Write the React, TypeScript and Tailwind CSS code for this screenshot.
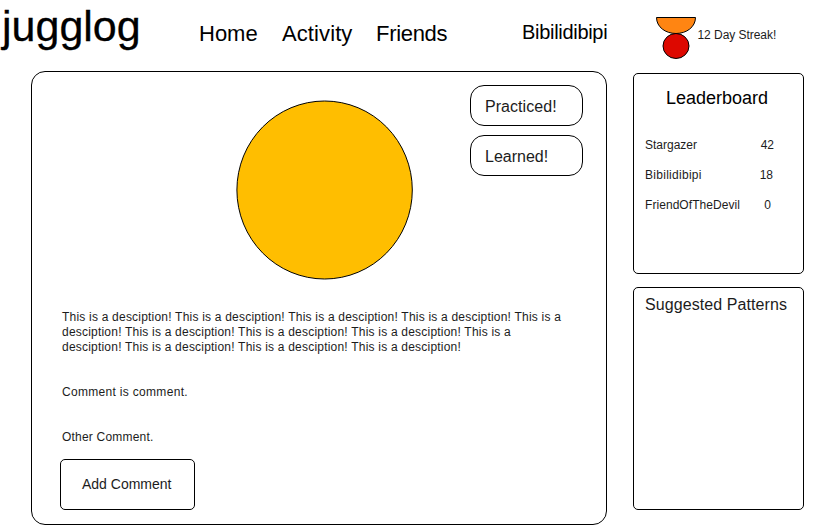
import React from "react";

const leaders = [
  { name: "Stargazer", score: "42", pad: "pr-[29px]", track: "" },
  { name: "Bibilidibipi", score: "18", pad: "pr-[30px]", track: "tracking-[0.28px]" },
  { name: "FriendOfTheDevil", score: "0", pad: "pr-8", track: "tracking-[0.06px]" },
];

function Header() {
  return (
    <header className="flex h-[71px] items-start whitespace-nowrap">
      <h1 className="w-[199px] pl-[2px] text-[43px] leading-[52px] [-webkit-text-stroke:0.3px_black]">jugglog</h1>
      <nav className="flex w-[323px] pt-[18px] text-[22px] leading-8">
        <a className="w-[83px]">Home</a>
        <a className="w-[94px] tracking-[0.1px]">Activity</a>
        <a className="tracking-[-0.3px]">Friends</a>
      </nav>
      <div className="w-[134px] pt-5 text-[20px] leading-6 tracking-[-0.3px]">Bibilidibipi</div>
      <svg className="mt-4 h-11 w-10" viewBox="656 16 40 44" fill="none" stroke="#000">
        <path d="M656.5 17.5H695.5C695.5 27 686.5 33.5 676 33.5S656.5 27 656.5 17.5Z" fill="#ff8512" />
        <ellipse cx="676" cy="46" rx="13" ry="12.5" fill="#dd0800" />
      </svg>
      <div className="pl-[1.5px] pt-7 text-[12px] leading-[14px] tracking-[-0.05px] text-[#1c1c1c]">12 Day Streak!</div>
    </header>
  );
}

function Post() {
  return (
    <main className="flex h-[454px] w-[576px] flex-col rounded-[14px] border border-black">
      <div className="flex h-[238px] justify-between pl-[204px] pr-[23px]">
        <svg className="mt-7 h-[180px] w-[178px]" viewBox="236 100 178 180">
          <ellipse cx="324.6" cy="190" rx="87.7" ry="89" fill="#ffbe00" stroke="#000" />
        </svg>
        <div className="flex w-[113px] flex-col gap-[9px] pt-[13px] text-[16px] text-[#1c1c1c]">
          <button className="h-[41px] rounded-[14px] border border-black pl-[14px] pt-[2px] text-left tracking-[0.05px]">
            Practiced!
          </button>
          <button className="h-[41px] rounded-[14px] border border-black pl-[14px] pt-[2px] text-left">
            Learned!
          </button>
        </div>
      </div>
      <div className="flex h-[149px] flex-col pl-[30px] text-[12px] leading-[15px] text-[#1c1c1c]">
        <p className="h-[75px] w-[510px] tracking-[0.21px]">
          This is a desciption! This is a desciption! This is a desciption! This is a desciption! This is a
          <br />
          desciption! This is a desciption! This is a desciption! This is a desciption! This is a
          <br />
          desciption! This is a desciption! This is a desciption! This is a desciption!
        </p>
        <p className="h-[45px] tracking-[0.31px]">Comment is comment.</p>
        <p className="tracking-[0.2px]">Other Comment.</p>
      </div>
      <button className="ml-7 h-[51px] w-[135px] rounded-[5px] border border-black pl-[21px] text-left text-[14px] text-[#1c1c1c]">
        Add Comment
      </button>
    </main>
  );
}

function Sidebar() {
  return (
    <aside className="flex w-[171px] flex-col gap-[13px] pt-[2px]">
      <section className="h-[201px] rounded-[5px] border border-black pt-[14px]">
        <h2 className="pl-8 text-[18px] leading-5">Leaderboard</h2>
        <ul className="pt-[22px] text-[12px] leading-[30px] text-[#1c1c1c]">
          {leaders.map((l) => (
            <li key={l.name} className={`flex justify-between pl-[11px] ${l.pad}`}>
              <span className={l.track}>{l.name}</span>
              <span>{l.score}</span>
            </li>
          ))}
        </ul>
      </section>
      <section className="h-[223px] rounded-[5px] border border-black pl-[11px] pt-[7px]">
        <h2 className="whitespace-nowrap text-[16px] leading-5 tracking-[0.08px] text-[#1c1c1c]">Suggested Patterns</h2>
      </section>
    </aside>
  );
}

export default function App() {
  return (
    <div className="h-[525px] w-[817px] overflow-hidden bg-white font-['Liberation_Sans',Arial,sans-serif] text-black">
      <Header />
      <div className="flex gap-[26px] pl-[31px]">
        <Post />
        <Sidebar />
      </div>
    </div>
  );
}
